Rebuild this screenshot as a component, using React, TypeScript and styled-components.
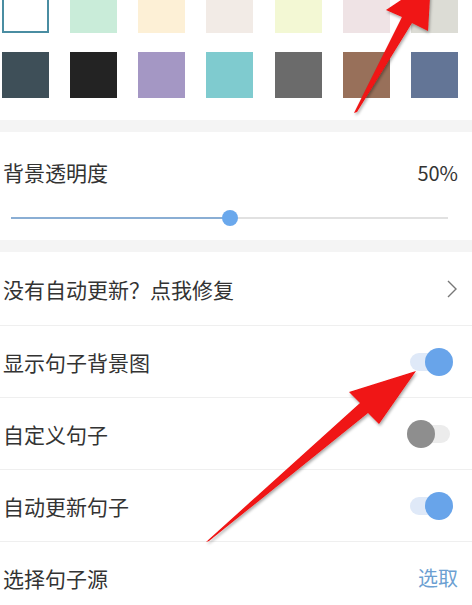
import styled, { createGlobalStyle } from 'styled-components';

const GlobalStyle = createGlobalStyle`
  html, body {
    margin: 0;
    padding: 0;
    background: #ffffff;
  }
  body {
    font-family: "Noto Sans CJK SC", "Noto Sans", sans-serif;
    color: #333333;
    overflow: hidden;
  }
`;

const Page = styled.div`
  position: relative;
  width: 472px;
  height: 605px;
  overflow: hidden;
  background: #ffffff;
`;

const SwatchGrid = styled.div`
  display: grid;
  grid-template-columns: repeat(7, 47px);
  grid-auto-rows: 46px;
  justify-content: space-between;
  row-gap: 19px;
  margin-top: -13px;
  padding: 0 14px 22px 2px;
`;

const Swatch = styled.div<{ color: string; selected?: boolean }>`
  background: ${(p) => p.color};
  box-sizing: border-box;
  border: ${(p) => (p.selected ? '2px solid #4a8da2' : 'none')};
`;

const Band = styled.div`
  height: 12px;
  background: #f4f4f4;
`;

const OpacitySection = styled.div`
  height: 108px;
  padding: 24px 14px 0 3px;
  box-sizing: border-box;
`;

const LabelRow = styled.div`
  display: flex;
  justify-content: space-between;
  align-items: center;
  height: 32px;
`;

const Label = styled.span`
  font-size: 21px;
  color: #333333;
`;

const Value = styled.span<{ accent?: boolean }>`
  font-size: 20px;
  color: ${(p) => (p.accent ? '#6c9fd2' : '#333333')};
`;

const SliderTrack = styled.div`
  position: relative;
  margin: 29px 10px 0 8px;
  height: 2px;
  background: #e1e1e1;
`;

const SliderFill = styled.div`
  position: absolute;
  left: 0;
  top: 0;
  height: 2px;
  background: #8aaed4;
`;

const SliderThumb = styled.div`
  position: absolute;
  top: -7px;
  width: 16px;
  height: 16px;
  margin-left: -8px;
  border-radius: 50%;
  background: #6aa8ec;
`;

const Row = styled.div<{ tall?: boolean }>`
  display: flex;
  align-items: center;
  justify-content: space-between;
  height: ${(p) => (p.tall ? '73px' : '71px')};
  padding: 0 14px 0 3px;
  border-bottom: 1px solid #efefef;
`;

const ToggleBox = styled.div`
  position: relative;
  width: 46px;
  height: 28px;
  margin-right: 5px;
`;

const ToggleTrack = styled.div<{ on: boolean }>`
  position: absolute;
  top: 5px;
  left: 3px;
  right: 3px;
  height: 18px;
  border-radius: 9px;
  background: ${(p) => (p.on ? '#dfe9f8' : '#ececec')};
`;

const ToggleThumb = styled.div<{ on: boolean }>`
  position: absolute;
  top: 0;
  ${(p) => (p.on ? 'right: 0;' : 'left: 0;')}
  width: 28px;
  height: 28px;
  border-radius: 50%;
  background: ${(p) => (p.on ? '#68a4ea' : '#8e8e8e')};
`;

const Overlay = styled.svg`
  position: absolute;
  inset: 0;
  pointer-events: none;
`;

const Toggle = ({ on }: { on: boolean }) => (
  <ToggleBox>
    <ToggleTrack on={on} />
    <ToggleThumb on={on} />
  </ToggleBox>
);

const lightRow = ['#ffffff', '#c9ecd9', '#fdf0d6', '#f2ebe6', '#f3f8d4', '#efe3e5', '#dcdcd5'];
const darkRow = ['#3e4f58', '#232323', '#a497c4', '#7fcbcf', '#6b6b6b', '#98705a', '#637596'];

export default function App() {
  const opacity = 50;

  return (
    <Page>
      <GlobalStyle />
      <SwatchGrid>
        {lightRow.map((c, i) => (
          <Swatch key={'l' + i} color={c} selected={i === 0} />
        ))}
        {darkRow.map((c, i) => (
          <Swatch key={'d' + i} color={c} />
        ))}
      </SwatchGrid>
      <Band />

      <OpacitySection>
        <LabelRow>
          <Label>背景透明度</Label>
          <Value>{opacity}%</Value>
        </LabelRow>
        <SliderTrack>
          <SliderFill style={{ width: `${opacity}%` }} />
          <SliderThumb style={{ left: `${opacity}%` }} />
        </SliderTrack>
      </OpacitySection>
      <Band />

      <Row tall>
        <Label>没有自动更新？点我修复</Label>
        <svg width="12" height="20" viewBox="0 0 12 20">
          <path d="M2 2 L10 10 L2 18" fill="none" stroke="#777" strokeWidth="1.4" />
        </svg>
      </Row>
      <Row>
        <Label>显示句子背景图</Label>
        <Toggle on />
      </Row>
      <Row>
        <Label>自定义句子</Label>
        <Toggle on={false} />
      </Row>
      <Row>
        <Label>自动更新句子</Label>
        <Toggle on />
      </Row>
      <Row>
        <Label>选择句子源</Label>
        <Value accent>选取</Value>
      </Row>

      <Overlay width="472" height="605" viewBox="0 0 472 605">
        <defs>
          <filter id="shade" x="-20%" y="-20%" width="140%" height="140%">
            <feDropShadow dx="1" dy="2" stdDeviation="1.5" floodColor="#000" floodOpacity="0.35" />
          </filter>
        </defs>
        <polygon
          points="354,113 402,17 386,10 431,-20 428,31 412,23 357,112"
          fill="#f01212"
          filter="url(#shade)"
        />
        <polygon
          points="206,542 360,403 349,392 416,371 379,424 368,413 209,541"
          fill="#f01212"
          filter="url(#shade)"
        />
      </Overlay>
    </Page>
  );
}
